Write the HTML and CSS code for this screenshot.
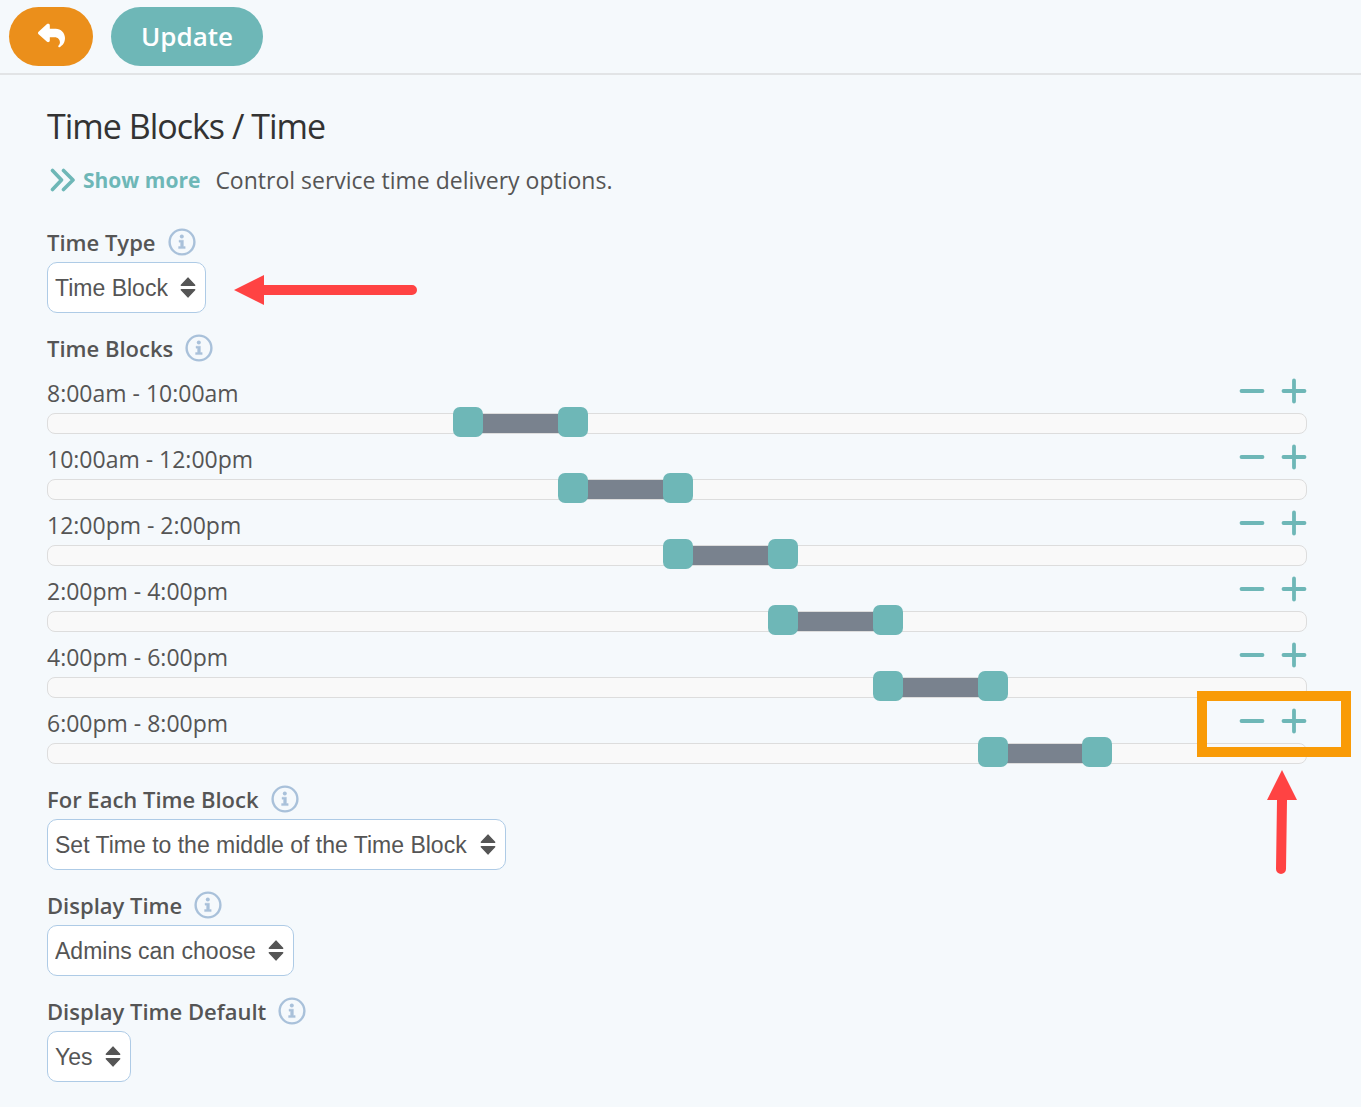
FILE: index.html
```html
<!DOCTYPE html>
<html lang="en">

<head>
  <meta charset="UTF-8">
  <meta name="viewport" content="width=device-width, initial-scale=1.0">
  <title>Time Blocks / Time</title>

  <link rel="stylesheet" href="styles.css">
</head>

<body>
  <!-- shared icons -->
  <svg class="sprite" aria-hidden="true">
    <symbol id="icon-info" viewBox="0 0 28 28">
      <circle cx="14" cy="14" r="12.4" fill="none" stroke="currentColor" stroke-width="2.4"/>
      <circle cx="13.8" cy="8.6" r="2" fill="currentColor"/>
      <path d="M11 12.2h4.4v6.400h1.800v2h-6.600v-2h2v-4.400h-1.600z" fill="currentColor" stroke="currentColor" stroke-width=".4" stroke-linejoin="round"/>
    </symbol>
    <symbol id="icon-sort" viewBox="0 0 16 22">
      <path d="M8 1.200L14.600 8.200H1.400zM8 19.800L14.600 12.800H1.400z" fill="currentColor" stroke="currentColor" stroke-width="1.600" stroke-linejoin="round"/>
    </symbol>
    <symbol id="icon-minus" viewBox="0 0 26 26">
      <path d="M2.500 13h21" fill="none" stroke="currentColor" stroke-width="3.800" stroke-linecap="round"/>
    </symbol>
    <symbol id="icon-plus" viewBox="0 0 26 26">
      <path d="M2.500 13h21M13 2.500v21" fill="none" stroke="currentColor" stroke-width="3.800" stroke-linecap="round"/>
    </symbol>
  </svg>

  <header class="toolbar">
    <button type="button" class="btn btn-back" aria-label="Back">
      <svg viewBox="0 0 512 512" aria-hidden="true"><path fill="currentColor" d="M205 34.800c11.500 5.100 19 16.600 19 29.200v64H336c97.200 0 176 78.800 176 176c0 113.300-81.500 163.900-100.200 174.100c-2.500 1.400-5.300 1.900-8.100 1.900c-10.900 0-19.700-8.900-19.700-19.700c0-7.500 4.300-14.400 9.800-19.500c9.400-8.800 22.200-26.400 22.200-56.700c0-53-43-96-96-96H224v64c0 12.600-7.400 24.100-19 29.200s-25 3-34.400-5.400l-160-144C3.900 225.700 0 217.100 0 208s3.900-17.700 10.600-23.800l160-144c9.400-8.500 22.900-10.600 34.400-5.400z"/></svg>
    </button>
    <button type="button" class="btn btn-update">Update</button>
  </header>

  <main class="content">
    <h1>Time Blocks / Time</h1>
    <p class="intro">
      <a href="#" class="show-more">
        <svg viewBox="0 0 26 24" aria-hidden="true"><path d="M2.500 2.500L11.500 12l-9 9.500M13.500 2.500L23 12l-9.500 9.500" fill="none" stroke="currentColor" stroke-width="3.600" stroke-linecap="round" stroke-linejoin="round"/></svg>
        Show more
      </a>
      <span>Control service time delivery options.</span>
    </p>

    <div class="field">
      <div class="field-label">
        <label for="timeType">Time Type</label>
        <svg class="info"><use href="#icon-info"/></svg>
      </div>
      <div class="select">
        <select id="timeType">
          <option>Time Block</option>
          <option>Time</option>
        </select>
        <svg class="sort"><use href="#icon-sort"/></svg>
        <svg class="arrow-left" viewBox="0 0 184 30" aria-hidden="true">
          <path d="M0 15L30 0v10h148a5 5 0 0 1 0 10H30v10z" fill="#ff4343"/>
        </svg>
      </div>
    </div>

    <div class="field" id="timeBlocks">
      <div class="field-label">
        <span>Time Blocks</span>
        <svg class="info"><use href="#icon-info"/></svg>
      </div>

      <div class="block">
        <div class="block-head">
          <span class="range">8:00am - 10:00am</span>
          <div class="block-actions">
            <button type="button" aria-label="Remove block"><svg><use href="#icon-minus"/></svg></button>
            <button type="button" aria-label="Add block"><svg><use href="#icon-plus"/></svg></button>
          </div>
        </div>
        <div class="slider" style="--from: 8; --to: 10">
          <div class="slider-fill"></div>
          <input type="range" min="0" max="24" step="1" value="8" aria-label="Start time">
          <input type="range" min="0" max="24" step="1" value="10" aria-label="End time">
        </div>
      </div>

      <div class="block">
        <div class="block-head">
          <span class="range">10:00am - 12:00pm</span>
          <div class="block-actions">
            <button type="button" aria-label="Remove block"><svg><use href="#icon-minus"/></svg></button>
            <button type="button" aria-label="Add block"><svg><use href="#icon-plus"/></svg></button>
          </div>
        </div>
        <div class="slider" style="--from: 10; --to: 12">
          <div class="slider-fill"></div>
          <input type="range" min="0" max="24" step="1" value="10" aria-label="Start time">
          <input type="range" min="0" max="24" step="1" value="12" aria-label="End time">
        </div>
      </div>

      <div class="block">
        <div class="block-head">
          <span class="range">12:00pm - 2:00pm</span>
          <div class="block-actions">
            <button type="button" aria-label="Remove block"><svg><use href="#icon-minus"/></svg></button>
            <button type="button" aria-label="Add block"><svg><use href="#icon-plus"/></svg></button>
          </div>
        </div>
        <div class="slider" style="--from: 12; --to: 14">
          <div class="slider-fill"></div>
          <input type="range" min="0" max="24" step="1" value="12" aria-label="Start time">
          <input type="range" min="0" max="24" step="1" value="14" aria-label="End time">
        </div>
      </div>

      <div class="block">
        <div class="block-head">
          <span class="range">2:00pm - 4:00pm</span>
          <div class="block-actions">
            <button type="button" aria-label="Remove block"><svg><use href="#icon-minus"/></svg></button>
            <button type="button" aria-label="Add block"><svg><use href="#icon-plus"/></svg></button>
          </div>
        </div>
        <div class="slider" style="--from: 14; --to: 16">
          <div class="slider-fill"></div>
          <input type="range" min="0" max="24" step="1" value="14" aria-label="Start time">
          <input type="range" min="0" max="24" step="1" value="16" aria-label="End time">
        </div>
      </div>

      <div class="block">
        <div class="block-head">
          <span class="range">4:00pm - 6:00pm</span>
          <div class="block-actions">
            <button type="button" aria-label="Remove block"><svg><use href="#icon-minus"/></svg></button>
            <button type="button" aria-label="Add block"><svg><use href="#icon-plus"/></svg></button>
          </div>
        </div>
        <div class="slider" style="--from: 16; --to: 18">
          <div class="slider-fill"></div>
          <input type="range" min="0" max="24" step="1" value="16" aria-label="Start time">
          <input type="range" min="0" max="24" step="1" value="18" aria-label="End time">
        </div>
      </div>

      <div class="block">
        <div class="block-head">
          <span class="range">6:00pm - 8:00pm</span>
          <div class="block-actions">
            <button type="button" aria-label="Remove block"><svg><use href="#icon-minus"/></svg></button>
            <button type="button" aria-label="Add block"><svg><use href="#icon-plus"/></svg></button>
          </div>
        </div>
        <div class="slider" style="--from: 18; --to: 20">
          <div class="slider-fill"></div>
          <input type="range" min="0" max="24" step="1" value="18" aria-label="Start time">
          <input type="range" min="0" max="24" step="1" value="20" aria-label="End time">
        </div>
        <!-- callout on the add / remove buttons -->
        <div class="callout"></div>
        <svg class="arrow-up" viewBox="0 0 30 104" aria-hidden="true">
          <path d="M15 0L30 30H20L19 99a5 5 0 0 1-10 0L10 30H0z" fill="#ff4343"/>
        </svg>
      </div>
    </div>

    <div class="field">
      <div class="field-label">
        <label for="eachBlock">For Each Time Block</label>
        <svg class="info"><use href="#icon-info"/></svg>
      </div>
      <div class="select">
        <select id="eachBlock">
          <option>Set Time to the middle of the Time Block</option>
        </select>
        <svg class="sort"><use href="#icon-sort"/></svg>
      </div>
    </div>

    <div class="field">
      <div class="field-label">
        <label for="displayTime">Display Time</label>
        <svg class="info"><use href="#icon-info"/></svg>
      </div>
      <div class="select">
        <select id="displayTime">
          <option>Admins can choose</option>
        </select>
        <svg class="sort"><use href="#icon-sort"/></svg>
      </div>
    </div>

    <div class="field">
      <div class="field-label">
        <label for="displayDefault">Display Time Default</label>
        <svg class="info"><use href="#icon-info"/></svg>
      </div>
      <div class="select">
        <select id="displayDefault">
          <option>Yes</option>
          <option>No</option>
        </select>
        <svg class="sort"><use href="#icon-sort"/></svg>
      </div>
    </div>
  </main>

  <script src="script.js"></script>
</body>

</html>
```
FILE: styles.css
```css
* {
  box-sizing: border-box;
  margin: 0;
  padding: 0;
}

body {
  background-color: #f5f9fc;
  color: #555;
  font-family: "Open Sans", "Noto Sans", sans-serif;
  font-size: 23px;
  line-height: 36px;
}

button {
  border: none;
  cursor: pointer;
  font-family: inherit;
}

svg {
  display: block;
}

.sprite {
  position: absolute;
  width: 0;
  height: 0;
}

/* toolbar */
.toolbar {
  display: flex;
  gap: 18px;
  padding: 7px 9px;
  border-bottom: 2px solid #e2e4e6;
}

.btn {
  display: flex;
  align-items: center;
  justify-content: center;
  height: 59px;
  padding: 0 30px 2px;
  border-radius: 30px;
  color: #fff;
  font-size: 26px;
  font-weight: 600;
}

.btn-back {
  width: 84px;
  background-color: #eb8f1b;
}

.btn-back svg {
  flex: none;
  width: 27px;
  height: 27px;
}

.btn-update {
  background-color: #6eb7b7;
}

/* content */
.content {
  padding: 27px 54px 24px 47px;
}

h1 {
  color: #333;
  font-size: 34px;
  font-weight: 400;
  letter-spacing: -1px;
  line-height: 48px;
}

.intro {
  display: flex;
  gap: 15px;
  margin: 12px 0 26px;
}

.show-more {
  display: flex;
  align-items: center;
  gap: 7px;
  padding-left: 3px;
  color: #6eb7b7;
  font-size: 21px;
  font-weight: 700;
  text-decoration: none;
}

.show-more svg {
  width: 26px;
  height: 24px;
}

.field {
  margin-bottom: 17px;
}

.field-label {
  display: flex;
  align-items: center;
  gap: 12px;
  height: 38px;
  padding-bottom: 2px;
  font-size: 22px;
  font-weight: 600;
}

.info {
  width: 28px;
  height: 28px;
  color: #a9c1da;
}

.select {
  position: relative;
  width: fit-content;
}

.select select {
  display: block;
  height: 51px;
  padding: 0 37px 0 7px;
  border: 1px solid #aecbe6;
  border-radius: 10px;
  background-color: #fff;
  color: #555;
  font-family: "Liberation Sans", Arial, sans-serif;
  font-size: 23px;
  appearance: none;
}

.sort {
  position: absolute;
  top: 15px;
  right: 10px;
  width: 16px;
  height: 22px;
  pointer-events: none;
}

/* time blocks */
.block {
  position: relative;
}

.block-head {
  display: flex;
  align-items: center;
  justify-content: space-between;
  height: 45px;
}

.range {
  padding-top: 4px;
}

.block-actions {
  display: flex;
  gap: 16px;
}

.block-actions button {
  background: none;
  color: #6eb7b7;
}

.block-actions svg {
  width: 26px;
  height: 26px;
}

.slider {
  position: relative;
  height: 21px;
  border: 1px solid #ddd;
  border-radius: 8px;
  background-color: #f9f9f9;
}

.slider-fill {
  width: calc((var(--to) - var(--from)) / 24 * 100%);
  height: 100%;
  margin-left: calc(var(--from) / 24 * 100%);
  background-color: #79828e;
}

/* both inputs lie over the track, only the thumbs take the mouse */
.slider input {
  position: absolute;
  top: -7px;
  left: -14px;
  width: calc(100% + 30px);
  height: 30px;
  background: none;
  pointer-events: none;
  appearance: none;
}

.slider input::-webkit-slider-thumb {
  width: 30px;
  height: 30px;
  border-radius: 7px;
  background-color: #6eb7b7;
  cursor: pointer;
  pointer-events: auto;
  -webkit-appearance: none;
}

/* callouts */
.callout {
  position: absolute;
  top: -7px;
  right: -44px;
  width: 154px;
  height: 66px;
  border: 10px solid #f99b07;
  pointer-events: none;
}

.arrow-up {
  position: absolute;
  top: 72px;
  right: 10px;
  width: 30px;
  height: 104px;
}

.arrow-left {
  position: absolute;
  top: 13px;
  left: 187px;
  width: 184px;
  height: 30px;
}
```
FILE: script.js
```js
function formatHour(hour) {
  const h = hour % 12 || 12
  return h + ':00' + (hour % 24 < 12 ? 'am' : 'pm')
}

document.querySelectorAll('.block').forEach(function (block) {
  const slider = block.querySelector('.slider')
  const inputs = block.querySelectorAll('input')
  const range = block.querySelector('.range')

  function update() {
    // the handles may cross, the lower one is always the start
    const from = Math.min(inputs[0].value, inputs[1].value)
    const to = Math.max(inputs[0].value, inputs[1].value)
    slider.style.setProperty('--from', from)
    slider.style.setProperty('--to', to)
    range.textContent = formatHour(from) + ' - ' + formatHour(to)
  }

  inputs[0].oninput = update
  inputs[1].oninput = update
})
```
